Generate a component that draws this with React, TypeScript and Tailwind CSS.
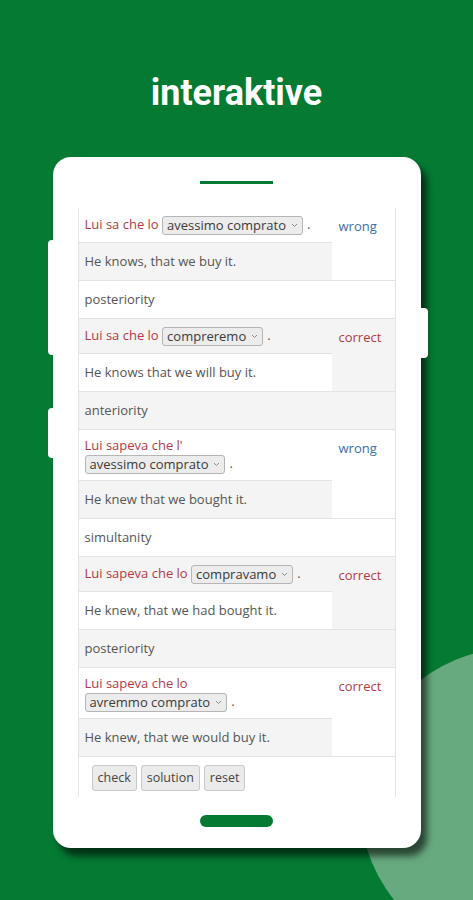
import React from "react";

const Chevron = () => (
  <svg width="7" height="5" viewBox="0 0 7 5" className="ml-[5px] mt-[1px]">
    <path d="M1 1 L3.5 3.5 L6 1" fill="none" stroke="#8a8a8a" strokeWidth="1" />
  </svg>
);

const Select = ({ value }: { value: string }) => (
  <span className="inline-flex items-center h-[19px] px-[4px] bg-[#ececec] border border-[#b5b5b5] rounded-[3px] text-[#3a3a3a] leading-[17px]">
    {value}
    <Chevron />
  </span>
);

type Ex = {
  pre: string;
  sel: string;
  twoLine?: boolean;
  trans: string;
  result: "wrong" | "correct";
  gray: boolean;
};

const Exercise = ({ ex }: { ex: Ex }) => (
  <div className={`flex border-b border-[#e3e3e3] ${ex.gray ? "bg-[#f4f4f4]" : "bg-white"}`}>
    <div className="w-[253px] flex flex-col">
      {ex.twoLine ? (
        <div className="px-[6px] py-[6px] text-[#b23a48]">
          <div className="h-[18px] leading-[18px]">{ex.pre}</div>
          <div className="h-[20px] flex items-center">
            <Select value={ex.sel} />
            <span className="text-[#555] ml-[4px]">.</span>
          </div>
        </div>
      ) : (
        <div className="px-[6px] py-[7px] h-[34px] flex items-center whitespace-pre text-[#b23a48]">
          <span>{ex.pre} </span>
          <Select value={ex.sel} />
          <span className="text-[#555] ml-[4px]">.</span>
        </div>
      )}
      <div
        className={`border-t border-[#e3e3e3] px-[6px] py-[9px] leading-[19px] text-[#555] ${
          ex.gray ? "bg-white" : "bg-[#f4f4f4]"
        }`}
      >
        {ex.trans}
      </div>
    </div>
    <div
      className={`flex-1 pl-[7px] pt-[8px] leading-[20px] ${
        ex.result === "wrong" ? "text-[#3b6ea8]" : "text-[#b23a48]"
      }`}
    >
      {ex.result}
    </div>
  </div>
);

const Label = ({ text, gray }: { text: string; gray: boolean }) => (
  <div
    className={`border-b border-[#e3e3e3] px-[6px] py-[9px] leading-[19px] text-[#555] ${
      gray ? "bg-[#f4f4f4]" : "bg-white"
    }`}
  >
    {text}
  </div>
);

export default function App() {
  const exs: Ex[] = [
    { pre: "Lui sa che lo", sel: "avessimo comprato", trans: "He knows, that we buy it.", result: "wrong", gray: false },
    { pre: "Lui sa che lo", sel: "compreremo", trans: "He knows that we will buy it.", result: "correct", gray: true },
    { pre: "Lui sapeva che l'", sel: "avessimo comprato", twoLine: true, trans: "He knew that we bought it.", result: "wrong", gray: false },
    { pre: "Lui sapeva che lo", sel: "compravamo", trans: "He knew, that we had bought it.", result: "correct", gray: true },
    { pre: "Lui sapeva che lo", sel: "avremmo comprato", twoLine: true, trans: "He knew, that we would buy it.", result: "correct", gray: false },
  ];
  const labels = ["posteriority", "anteriority", "simultanity", "posteriority"];

  return (
    <div className="relative w-full h-[900px] overflow-hidden bg-[#047a33]">
      <div className="absolute left-[360px] top-[648px] w-[310px] h-[310px] rounded-full bg-[#67aa7f]" />
      <div className="relative flex flex-col items-center">
        <div
          className="pt-[72px] leading-[42px] text-[36px] font-bold text-white"
          style={{ fontFamily: "Roboto, 'Open Sans', sans-serif" }}
        >
          interaktive
        </div>
        <div className="relative mt-[43px] w-[368px] bg-white rounded-[18px] shadow-[6px_8px_7px_rgba(0,0,0,0.6)] flex flex-col items-center">
          <div className="absolute left-[-5px] top-[83px] w-[6px] h-[115px] bg-white rounded-l-[4px]" />
          <div className="absolute left-[-5px] top-[251px] w-[6px] h-[50px] bg-white rounded-l-[4px]" />
          <div className="absolute right-[-7px] top-[151px] w-[8px] h-[50px] bg-white rounded-r-[4px]" />
          <div className="mt-[24px] w-[73px] h-[3px] bg-[#047a33]" />
          <div
            className="mt-[24px] w-[318px] h-[589px] overflow-hidden border-x border-[#e3e3e3] text-[13px]"
            style={{ fontFamily: "'Open Sans', sans-serif" }}
          >
            {exs.map((ex, i) => (
              <React.Fragment key={i}>
                <Exercise ex={ex} />
                {i < labels.length && <Label text={labels[i]} gray={ex.gray} />}
              </React.Fragment>
            ))}
            <div className="flex gap-[4px] pl-[13px] pt-[8px] pb-[20px]">
              {["check", "solution", "reset"].map((b) => (
                <span
                  key={b}
                  className="h-[26px] px-[5px] leading-[24px] bg-[#ebebeb] border border-[#c9c9c9] rounded-[3px] text-[#444] text-[12.5px]"
                >
                  {b}
                </span>
              ))}
            </div>
          </div>
          <div className="mt-[18px] mb-[21px] w-[73px] h-[12px] rounded-full bg-[#047a33]" />
        </div>
      </div>
    </div>
  );
}
